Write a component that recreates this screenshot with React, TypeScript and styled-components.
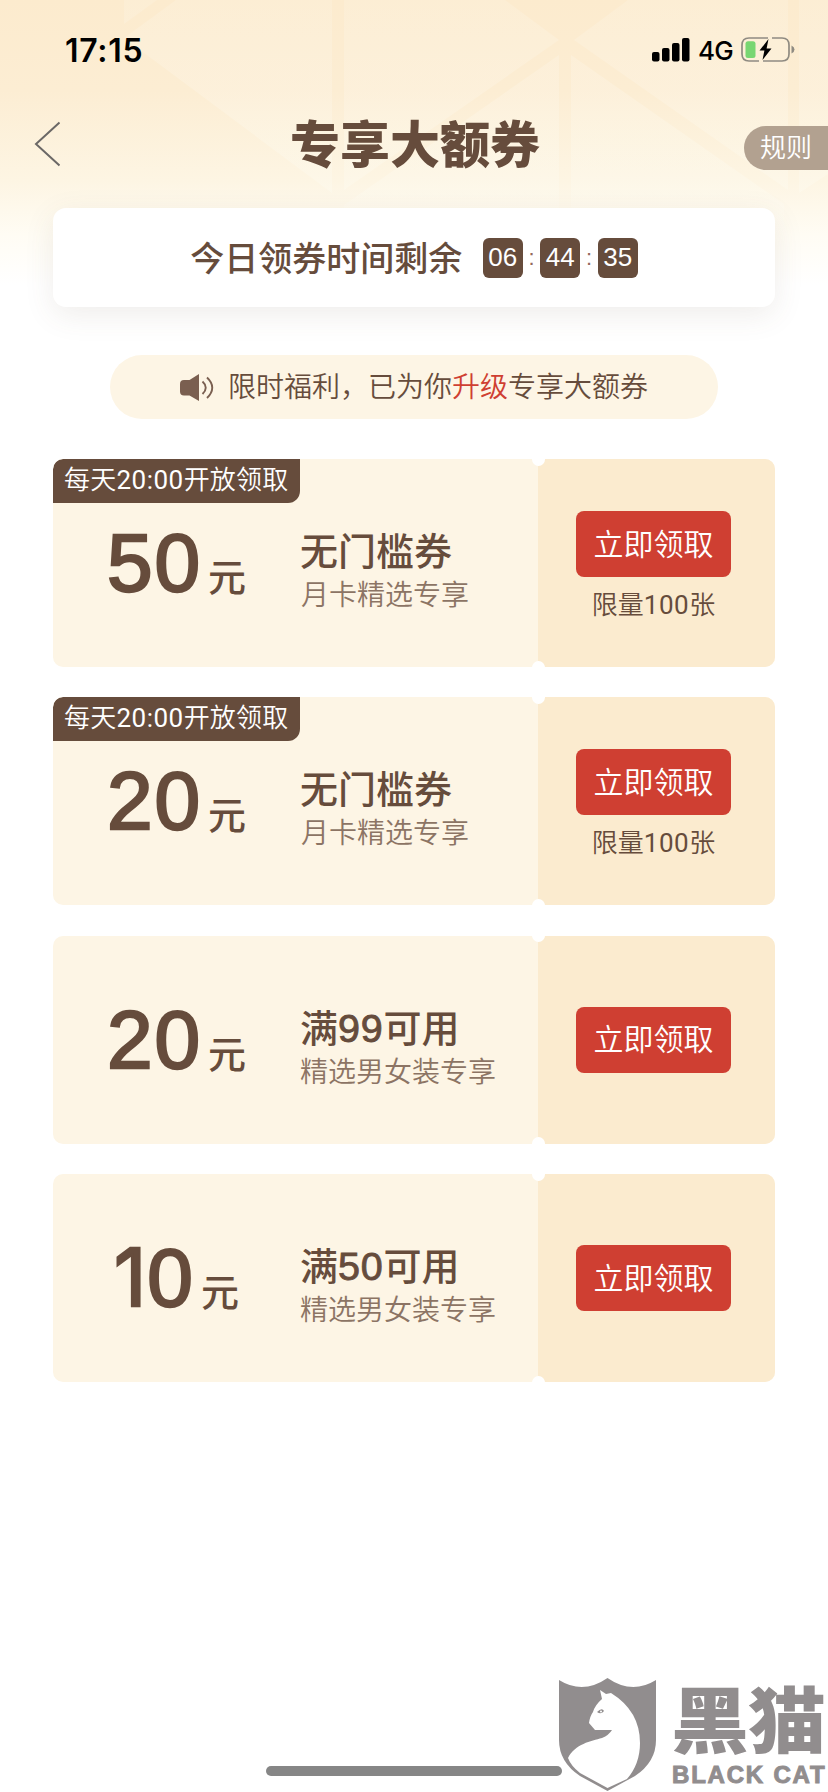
import React from 'react';
import styled, { createGlobalStyle, css } from 'styled-components';

const brown = '#664c3c';
const red = '#cf3f32';
const cream = '#fdf5e5';
const cjk = `"Liberation Sans", "Noto Sans CJK SC", sans-serif`;
const cjkLight = `Roboto, "Noto Sans CJK SC", sans-serif`;

const GlobalStyle = createGlobalStyle`
  * { box-sizing: border-box; }
  body { margin: 0; background: #fff; }
`;

const Page = styled.div`
  position: relative;
  width: 828px;
  height: 1792px;
  overflow: hidden;
  background: linear-gradient(180deg, #fcebce 0, #fcedd3 90px, #fdf5e3 180px, #fffcf4 235px, #fff 285px);
  font-family: ${cjk};
  color: ${brown};
  display: flex;
  flex-direction: column;
`;

const Backdrop = styled.svg`
  position: absolute;
  top: 0;
  left: 0;
`;

const StatusBar = styled.div`
  position: relative;
  height: 88px;
  padding: 12px 33px 0 65px;
  display: flex;
  align-items: center;
  justify-content: space-between;
  color: #000;
  font-family: Inter, sans-serif;
`;

const Clock = styled.span`
  font-size: 32px;
  font-weight: 600;
  letter-spacing: 0.7px;
`;

const StatusIcons = styled.div`
  display: flex;
  align-items: center;
  gap: 8px;
  font-size: 26px;
  font-weight: 450;
  letter-spacing: -0.7px;
`;

const NavBar = styled.header`
  position: relative;
  height: 120px;
  display: grid;
  grid-template-columns: 120px 1fr 120px;
  align-items: start;
`;

const BackButton = styled.button`
  border: 0;
  background: none;
  padding: 33px 0 0 34px;
  height: 88px;
  display: flex;
`;

const Title = styled.h1`
  margin: 0;
  padding: 22px 0 0 2px;
  text-align: center;
  font-size: 50px;
  line-height: 72px;
  font-weight: 900;
`;

const RulesButton = styled.button`
  justify-self: end;
  margin-top: 38px;
  width: 84px;
  height: 44px;
  padding: 0 0 0 16px;
  border: 0;
  border-radius: 22px 0 0 22px;
  background: #b2a190;
  color: #fff;
  font-family: ${cjkLight};
  font-size: 26px;
  font-weight: 350;
  line-height: 42px;
  text-align: left;
  white-space: nowrap;
`;

const Countdown = styled.section`
  position: relative;
  width: 722px;
  height: 99px;
  margin: 0 auto;
  border-radius: 13px;
  background: #fff;
  box-shadow: 0 8px 30px rgba(102, 76, 60, 0.1);
  display: flex;
  align-items: center;
  justify-content: center;
`;

const CountdownLabel = styled.span`
  font-size: 34px;
  font-weight: 500;
  line-height: 50px;
  margin: 2px 20.5px 0 0;
`;

const TimeBox = styled.span`
  width: 40px;
  height: 40px;
  border-radius: 6px;
  background: ${brown};
  color: #fff;
  font-size: 26px;
  line-height: 39px;
  text-align: center;
`;

const Colon = styled.span`
  width: 17.5px;
  text-align: center;
  font-size: 22px;
  color: #94695b;
`;

const Notice = styled.section`
  width: 608px;
  height: 64px;
  margin: 48px auto 40px;
  border-radius: 32px;
  background: ${cream};
  display: flex;
  align-items: center;
  padding: 2px 0 0 70px;
  gap: 14px;
  font-family: ${cjkLight};
  font-size: 28px;
  font-weight: 350;
  line-height: 62px;
`;

const Highlight = styled.em`
  font-style: normal;
  color: ${red};
`;

const CouponList = styled.main`
  width: 722px;
  margin: 0 auto;
  display: flex;
  flex-direction: column;
  gap: 30.4px;
`;

const Ticket = styled.article`
  position: relative;
  height: 208px;
  border-radius: 10px;
  overflow: hidden;
  display: grid;
  grid-template-columns: 247px 238px 1fr;
  background: ${cream};
`;

const notch = css`
  content: '';
  position: absolute;
  left: 479px;
  width: 13px;
  height: 13px;
  border-radius: 50%;
  background: #fff;
`;

const Notches = styled.i`
  &::before { ${notch} top: -6.5px; }
  &::after { ${notch} bottom: -6.5px; }
`;

const OpenTag = styled.span`
  position: absolute;
  top: 0;
  left: 0;
  width: 247px;
  height: 44px;
  padding-left: 11px;
  border-radius: 10px 0 12px 0;
  background: ${brown};
  color: #fff;
  font-family: ${cjkLight};
  font-size: 26px;
  font-weight: 350;
  line-height: 43px;
  letter-spacing: 0.2px;
  white-space: nowrap;
`;

const SmallFigure = styled.span`
  font-weight: 400;
  letter-spacing: 0.5px;
`;

const Amount = styled.div`
  height: 208px;
  display: flex;
  align-items: baseline;
  justify-content: center;
  font-size: 82px;
  line-height: 207px;
  letter-spacing: 2px;
  -webkit-text-stroke: 2.4px ${brown};
`;

const One = styled.span`
  font-family: Inter, sans-serif;
  font-size: 0.97em;
  letter-spacing: 0.01em;
`;

const Unit = styled.span`
  margin-left: 6px;
  font-size: 38px;
  font-weight: 500;
  letter-spacing: 0;
  -webkit-text-stroke: 0;
`;

const Detail = styled.div`
  padding-top: 68px;
  white-space: nowrap;
`;

const Name = styled.h2`
  margin: 0;
  font-size: 38px;
  line-height: 50px;
  font-weight: 500;
`;

const Figure = styled.span`
  font-size: 39.5px;
  line-height: 0;
  font-weight: 400;
  letter-spacing: 0.8px;
  -webkit-text-stroke: 0.9px ${brown};
`;

const Scope = styled.p<{ $indent?: boolean }>`
  margin: 0 0 0 ${(p) => (p.$indent ? 1 : 0)}px;
  font-size: 28px;
  line-height: 38px;
  font-weight: 350;
  color: #8c7464;
`;

const Claim = styled.div`
  background: #fbebcf;
  display: flex;
  flex-direction: column;
  align-items: center;
  justify-content: center;
`;

const ClaimButton = styled.button`
  width: 155px;
  height: 66px;
  margin-right: 6px;
  padding: 0 0 5px;
  border: 0;
  border-radius: 8px;
  background: ${red};
  color: #fff;
  font-family: ${cjkLight};
  font-size: 30px;
  font-weight: 350;
`;

const Limit = styled.span`
  margin: 9px 6px -9px 0;
  font-family: ${cjkLight};
  font-size: 26px;
  line-height: 38px;
  font-weight: 350;
`;

const HomeIndicator = styled.div`
  width: 296px;
  height: 10px;
  border-radius: 5px;
  margin: auto auto 16px;
  background: #868686;
`;

const Watermark = styled.div`
  position: absolute;
  right: 0;
  bottom: 0;
  width: 270px;
  height: 114px;
  display: flex;
  gap: 15px;
  color: #918d8e;
`;

const WatermarkText = styled.div`
  display: flex;
  flex-direction: column;
  white-space: nowrap;
`;

const BrandName = styled.span`
  margin-top: 2px;
  font-size: 78px;
  line-height: 84px;
  font-weight: 900;
  letter-spacing: -1px;
  transform: scaleY(0.92);
`;

const BrandLatin = styled.span`
  padding-left: 1px;
  font-size: 24px;
  line-height: 22px;
  font-weight: 700;
  letter-spacing: 1.8px;
  -webkit-text-stroke: 1px #918d8e;
`;

const Digits = ({ value }: { value: string }) => (
  <span>
    {value.split('').map((d, i) => (d === '1' ? <One key={i}>1</One> : d))}
  </span>
);

type Coupon = {
  amount: string;
  name: [string, string?, string?];
  scope: string;
  openAt?: string;
  limit?: number;
};

const coupons: Coupon[] = [
  { amount: '50', name: ['无门槛券'], scope: '月卡精选专享', openAt: '20:00', limit: 100 },
  { amount: '20', name: ['无门槛券'], scope: '月卡精选专享', openAt: '20:00', limit: 100 },
  { amount: '20', name: ['满', '99', '可用'], scope: '精选男女装专享' },
  { amount: '10', name: ['满', '50', '可用'], scope: '精选男女装专享' },
];

const CouponCard = ({ coupon }: { coupon: Coupon }) => (
  <Ticket>
    <Amount>
      <Digits value={coupon.amount} />
      <Unit>元</Unit>
    </Amount>
    <Detail>
      <Name>
        {coupon.name[0]}
        {coupon.name[1] && <Figure>{coupon.name[1]}</Figure>}
        {coupon.name[2]}
      </Name>
      <Scope $indent={!!coupon.limit}>{coupon.scope}</Scope>
    </Detail>
    <Claim>
      <ClaimButton>立即领取</ClaimButton>
      {coupon.limit && (
        <Limit>
          限量<SmallFigure>{coupon.limit}</SmallFigure>张
        </Limit>
      )}
    </Claim>
    {coupon.openAt && (
      <OpenTag>
        每天<SmallFigure>{coupon.openAt}</SmallFigure>开放领取
      </OpenTag>
    )}
    <Notches />
  </Ticket>
);

export default function App() {
  return (
    <Page>
      <GlobalStyle />
      <Backdrop width="828" height="290" viewBox="0 0 828 290">
        <defs>
          <linearGradient id="facet" gradientUnits="userSpaceOnUse" x1="0" y1="0" x2="0" y2="240">
            <stop offset="0" stopColor="#fff" stopOpacity="0.13" />
            <stop offset="0.8" stopColor="#fffef6" stopOpacity="0.25" />
            <stop offset="1" stopColor="#fff" stopOpacity="0" />
          </linearGradient>
        </defs>
        <g fill="url(#facet)">
          <path d="M124 0H157L124 24Z" />
          <path d="M176 0H332V193L124 38Z" />
          <path d="M344 0H505L559 40L344 190Z" />
          <path d="M559 55V232H344V205Z" />
          <path d="M571 55L784 204V232H571Z" />
          <path d="M628 0H788V190L574 40Z" />
          <path d="M799 0H828V174L799 193Z" />
        </g>
      </Backdrop>
      <StatusBar>
        <Clock>17:15</Clock>
        <StatusIcons>
          <svg width="38" height="24" viewBox="0 0 38 24">
            <rect x="0" y="14" width="7.5" height="9.5" rx="2" />
            <rect x="10" y="10" width="7.5" height="13.5" rx="2" />
            <rect x="20" y="5" width="7.5" height="18.5" rx="2" />
            <rect x="30" y="0" width="7.5" height="23.5" rx="2" />
          </svg>
          <span>4G</span>
          <svg width="54" height="26" viewBox="0 0 54 26">
            <path d="M27 1H8Q1 1 1 8V17Q1 24 8 24H18M29 1M22 24H41Q48 24 48 17V8Q48 1 41 1H31" fill="none" stroke="#8f8b82" strokeWidth="1.7" />
            <path d="M50.5 8.5Q53.5 10 53.5 12.5Q53.5 15 50.5 16.5Z" fill="#8f8b82" />
            <rect x="4.5" y="4.2" width="10" height="16.8" rx="2.5" fill="#78d672" />
            <path d="M27.5 2L18.5 13.6H23.4L21.5 23L30.5 11.4H25.6Z" />
          </svg>
        </StatusIcons>
      </StatusBar>
      <NavBar>
        <BackButton aria-label="返回">
          <svg width="28" height="46" viewBox="0 0 28 46">
            <path d="M25.5 1.5L2 23L25.5 44.5" fill="none" stroke="#6b6866" strokeWidth="2" />
          </svg>
        </BackButton>
        <Title>专享大额券</Title>
        <RulesButton>规则</RulesButton>
      </NavBar>
      <Countdown>
        <CountdownLabel>今日领券时间剩余</CountdownLabel>
        <TimeBox>06</TimeBox>
        <Colon>:</Colon>
        <TimeBox>44</TimeBox>
        <Colon>:</Colon>
        <TimeBox>35</TimeBox>
      </Countdown>
      <Notice>
        <svg width="34" height="28" viewBox="0 0 34 28">
          <path d="M19 0V27L9.5 21.5H4Q0 21.5 0 17.5V10Q0 6 4 6H9.5Z" fill="#7a5f50" />
          <path d="M22.5 7.5Q29 13.5 22.5 20M27 3.5Q37.5 13.5 27 24" fill="none" stroke="#7a5f50" strokeWidth="1.9" />
        </svg>
        <span>
          限时福利，已为你<Highlight>升级</Highlight>专享大额券
        </span>
      </Notice>
      <CouponList>
        {coupons.map((coupon, i) => (
          <CouponCard key={i} coupon={coupon} />
        ))}
      </CouponList>
      <HomeIndicator />
      <Watermark>
        <svg width="98" height="114" viewBox="0 0 98 114">
          <path d="M1 2Q25 17 49.5 0Q74 17 98 2V62Q98 84 77 98L49.5 113L22 98Q1 84 1 62Z" fill="#918d8e" />
          <path d="M42 12L48 16L53 15Q82 33 82 65Q82 86 69 101L49.5 110L22 95Q13 88 10 80C17 66 33 63 44 60Q51 57 54 52L37 52L31 45Q32 38 35 34Q37 27 44 21Z" fill="#fff" />
          <path d="M39 34Q44 29 46 33Q43 37 39 34Z" fill="#918d8e" />
          <circle cx="43" cy="33.5" r="1" fill="#fff" />
        </svg>
        <WatermarkText>
          <BrandName>黑猫</BrandName>
          <BrandLatin>BLACK CAT</BrandLatin>
        </WatermarkText>
      </Watermark>
    </Page>
  );
}
